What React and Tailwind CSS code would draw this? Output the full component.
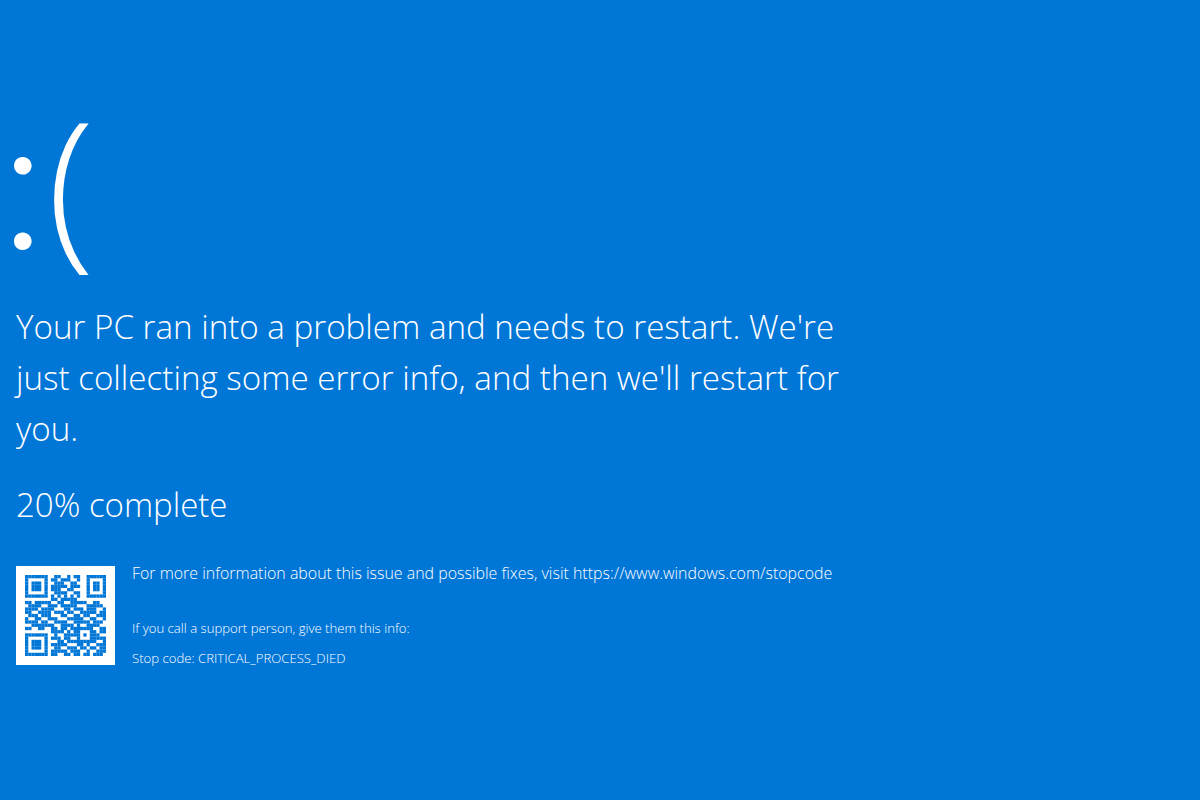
const qrRows = [
  "1111111001100101100111111",
  "1000001011011100100100001",
  "1011101001110011000101101",
  "1011101011111011100101101",
  "1011101011100110000101101",
  "1000001001111001100100001",
  "1111111010101010100111111",
  "0000000011011111000000000",
  "1101111100110011111001100",
  "0111100111011111000111110",
  "1111011110001101110111001",
  "1100111101110110011111011",
  "0111011100011001101100111",
  "1001100111000111110011001",
  "1111011001111001111101110",
  "0011111110011110100111100",
  "1100110011011011111110011",
  "0000000011110101100011011",
  "1111111001001111101011100",
  "1000001011101100100011111",
  "1011101000110111111111001",
  "1011101011111000110100111",
  "1011101001100111011011011",
  "1000001011111011100100111",
  "1111111011001101101101110",
];

function QrCode() {
  return (
    <div className="w-[99px] h-[99px] bg-white flex items-center justify-center shrink-0">
      <svg width="81" height="81" viewBox="0 0 25 25" className="blur-[0.5px]">
        {qrRows.map((row, y) =>
          row.split("").map((cell, x) =>
            cell === "1" ? <rect key={x + "-" + y} x={x} y={y} width="1.02" height="1.02" fill="#0076d7" /> : null
          )
        )}
      </svg>
    </div>
  );
}

export default function App() {
  return (
    <div className="min-h-screen w-[1200px] h-[800px] overflow-hidden bg-[#0076d7] text-white font-['Open_Sans',sans-serif] pl-4 pt-[96px]">

      {/* Sad face */}
      <div className="h-[170px] flex items-center -ml-[16px] select-none">
        <span className="w-[40px] text-[190px] leading-none font-['Lato',sans-serif] font-light -translate-y-[6px]">:</span>
        <span className="text-[174px] leading-none font-light ml-[7px]">(</span>
      </div>

      <p className="mt-[35px] w-[850px] text-[33.15px] leading-[51px] font-light">
        Your PC ran into a problem and needs to restart. We're just collecting some error info, and then we'll restart for you.
      </p>

      <p className="mt-[25px] text-[33px] leading-[51px] font-light">20% complete</p>

      {/* QR and details */}
      <div className="mt-[36px] flex gap-[17px]">
        <QrCode />
        <div className="font-light">
          <p className="text-[15.94px] leading-[14px]">
            For more information about this issue and possible fixes, visit https://www.windows.com/stopcode
          </p>
          <p className="mt-[40px] text-[13.15px] leading-[16px]">If you call a support person, give them this info:</p>
          <p className="mt-[14px] text-[13.15px] leading-[16px]">Stop code: CRITICAL_PROCESS_DIED</p>
        </div>
      </div>

    </div>
  );
}
